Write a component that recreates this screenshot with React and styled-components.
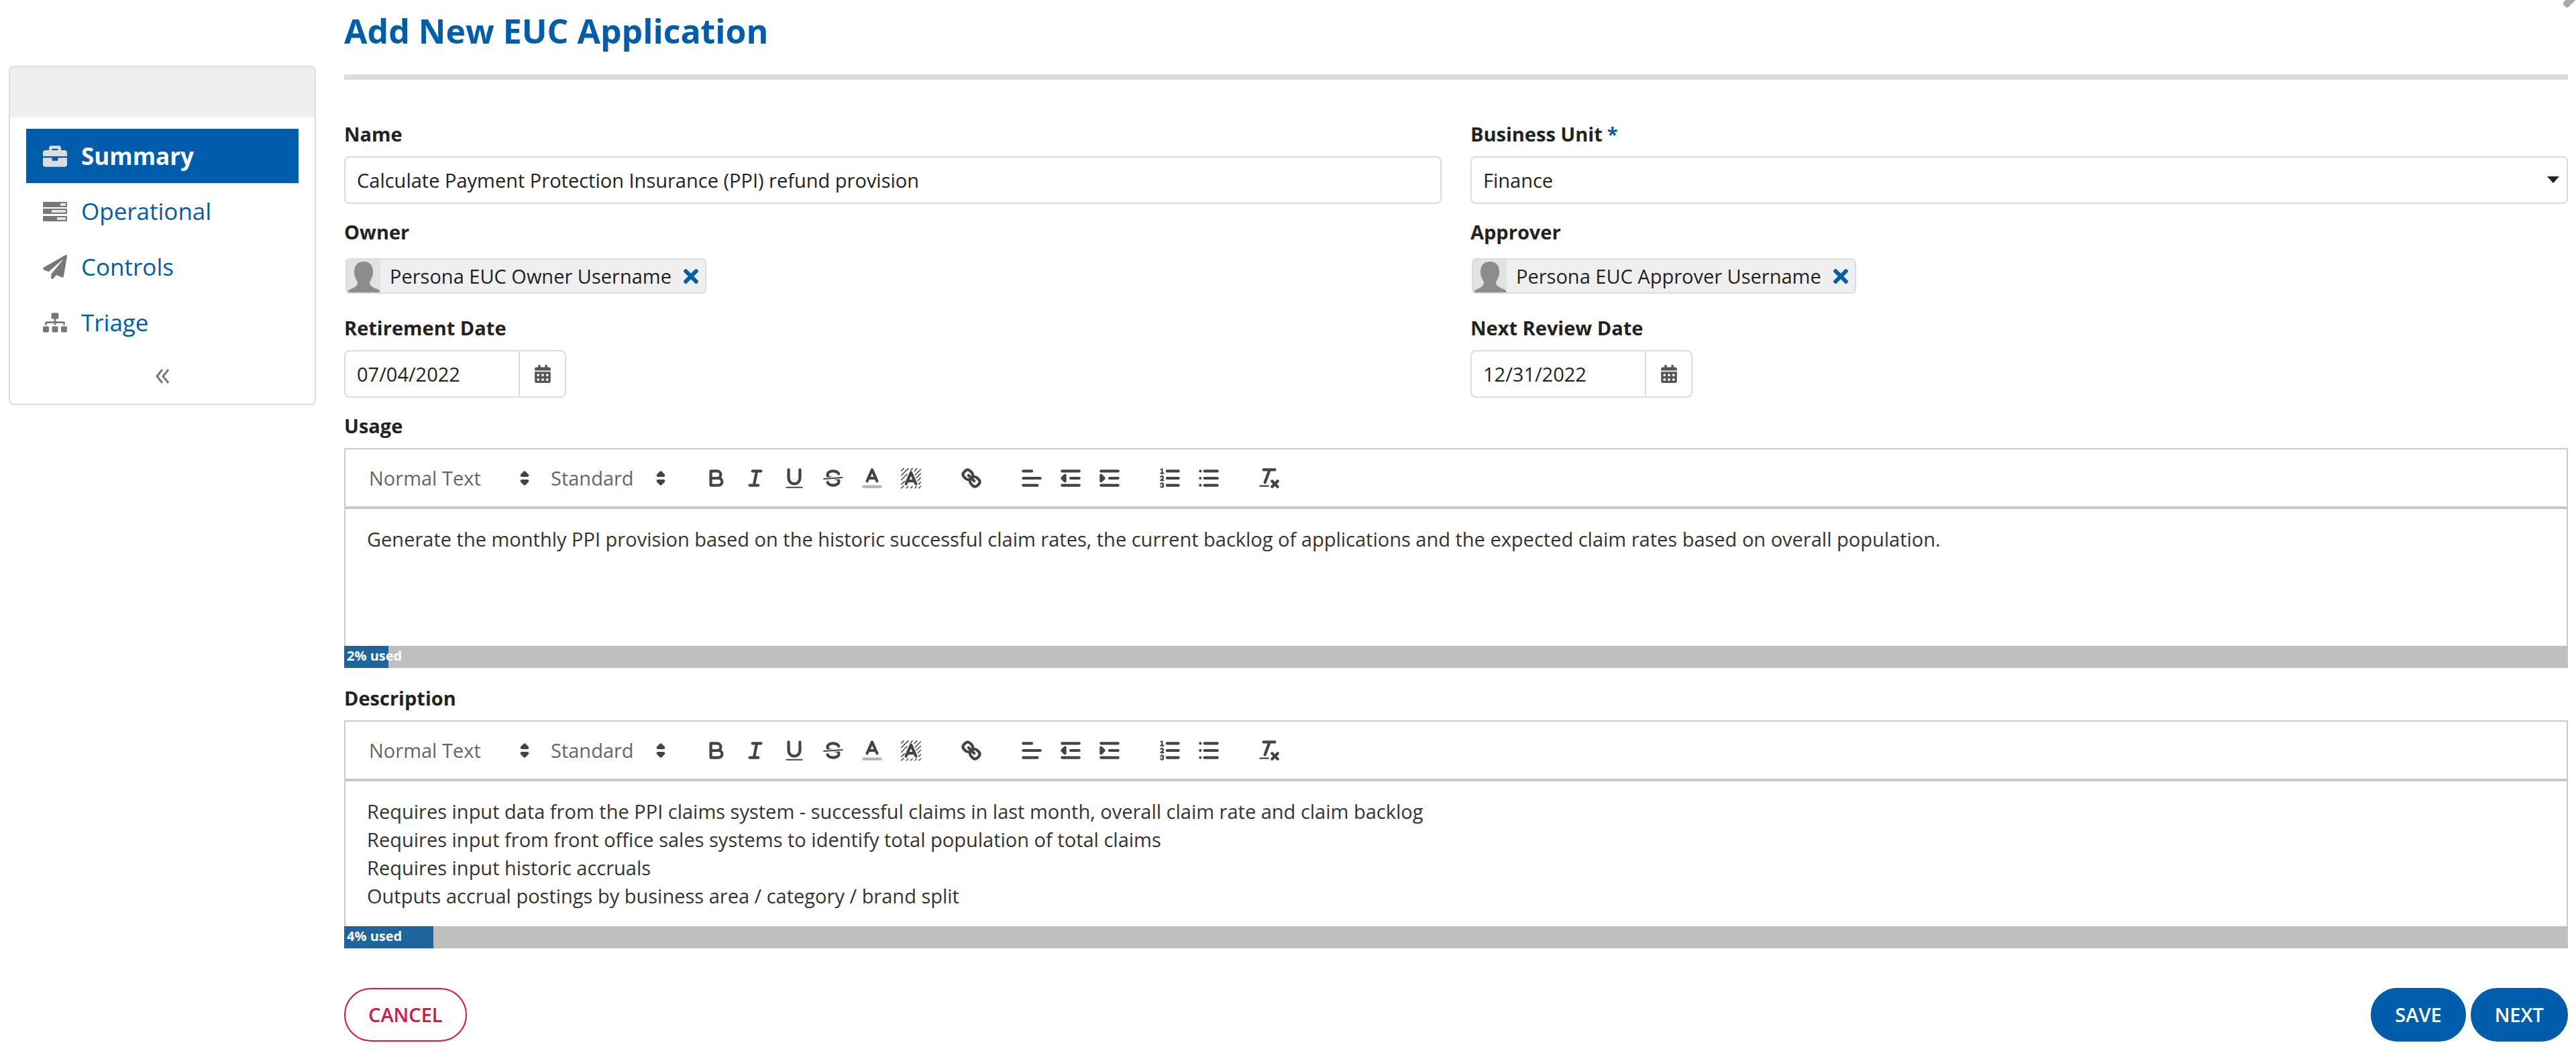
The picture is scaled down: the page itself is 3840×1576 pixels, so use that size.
import React, { useState } from "react";
import styled, { createGlobalStyle, css } from "styled-components";
import { FaBriefcase, FaPaperPlane, FaSitemap, FaTimes, FaCalendarAlt } from "react-icons/fa";

const GlobalStyle = createGlobalStyle`
  * {
    box-sizing: border-box;
  }

  body {
    margin: 0;
    background: #fff;
    color: #222;
    font-family: 'Open Sans', 'Noto Sans', sans-serif;
    font-size: 29px;
    line-height: 42px;
    overflow-x: hidden;
  }

  button, input, select, textarea {
    font: inherit;
    color: inherit;
    margin: 0;
  }
`;

const Page = styled.div`
  position: relative;
  display: flex;
  align-items: flex-start;
  gap: 42px;
  padding: 0 12px 22px 13px;
  overflow: hidden;
`;

const CloseButton = styled.button`
  position: absolute;
  top: -36px;
  right: -28px;
  display: flex;
  padding: 0;
  border: none;
  background: none;
  color: #aaa;
  font-size: 56px;
`;

const Sidebar = styled.nav`
  flex: 0 0 458px;
  margin-top: 98px;
  border: 2px solid #ddd;
  border-radius: 8px;
  overflow: hidden;
`;

const SidebarHeader = styled.div`
  height: 75px;
  background: #efefef;
`;

const NavList = styled.ul`
  list-style: none;
  margin: 0;
  padding: 17px 24px 0;
`;

const NavLink = styled.a`
  display: flex;
  align-items: center;
  gap: 21px;
  height: 83px;
  padding-left: 25px;
  color: #005dab;
  font-size: 35px;
  text-decoration: none;

  svg {
    width: 36px;
    height: 36px;
    color: #777;
  }

  ${props => props.$active && css`
    height: 81px;
    background: #005dab;
    color: #fff;
    font-weight: 700;

    svg {
      color: #ddd;
    }
  `}
`;

const CollapseButton = styled.button`
  display: block;
  width: 100%;
  height: 80px;
  padding: 0;
  border: none;
  background: none;
  color: #777;

  svg {
    width: 24px;
    height: 24px;
  }
`;

const Main = styled.main`
  flex: 1;
  min-width: 0;
`;

const Title = styled.h1`
  margin: 0;
  padding: 14px 0 33px;
  border-bottom: 8px solid #ddd;
  color: #005dab;
  font-size: 50px;
  font-weight: 700;
  line-height: 64px;
`;

const Columns = styled.div`
  display: grid;
  grid-template-columns: 1fr 1fr;
  column-gap: 43px;
  row-gap: 21px;
  margin-top: 60px;
`;

const Label = styled.label`
  display: block;
  margin-bottom: 12px;
  font-weight: 700;
`;

const Required = styled.span`
  margin-left: 7px;
  color: #005dab;
`;

const control = css`
  height: 71px;
  border: 2px solid #ddd;
  border-radius: 8px;
  background: #fff;
  padding: 0 17px;
`;

const TextInput = styled.input`
  ${control}
  display: block;
  width: 100%;
`;

const SelectWrap = styled.div`
  display: grid;
  align-items: center;

  select, svg {
    grid-area: 1 / 1;
  }

  svg {
    justify-self: end;
    margin-right: 12px;
    pointer-events: none;
  }
`;

const Select = styled.select`
  ${control}
  width: 100%;
  appearance: none;
`;

const PersonRow = styled.div`
  display: flex;
  padding: 6px 2px 9px;
`;

const Chip = styled.span`
  display: flex;
  align-items: center;
  height: 53px;
  border: 2px solid #ddd;
  border-radius: 6px;
  background: #efefef;
  overflow: hidden;
`;

const Avatar = styled.svg`
  width: 50px;
  height: 49px;
  margin-right: 14px;
  background: #e2e2e2;
`;

const RemoveButton = styled.button`
  display: flex;
  padding: 0 10px 0 18px;
  border: none;
  background: none;
  color: #005dab;

  svg {
    width: 22px;
    height: 32px;
  }
`;

const DateGroup = styled.div`
  display: flex;
`;

const DateInput = styled(TextInput)`
  width: 262px;
  border-radius: 8px 0 0 8px;
`;

const DateButton = styled.button`
  display: flex;
  align-items: center;
  justify-content: center;
  width: 69px;
  height: 71px;
  border: 2px solid #ddd;
  border-left: none;
  border-radius: 0 8px 8px 0;
  background: #fff;
  color: #555;

  svg {
    width: 24px;
    height: 27px;
  }
`;

const EditorField = styled.div`
  margin-top: ${props => props.$top}px;
`;

const Toolbar = styled.div`
  display: flex;
  align-items: center;
  gap: 32px;
  height: 87px;
  padding: 0 18px;
  border: 2px solid #ccc;
  border-bottom: none;
`;

const ToolGroup = styled.div`
  display: flex;
`;

const Picker = styled.div`
  display: grid;
  align-items: center;
  width: ${props => props.$width}px;
  height: 50px;
  color: #666;

  select, svg {
    grid-area: 1 / 1;
  }

  svg {
    justify-self: end;
    margin-right: 3px;
    pointer-events: none;
  }
`;

const PickerSelect = styled.select`
  width: 100%;
  height: 50px;
  padding: 0 17px;
  border: none;
  background: none;
  appearance: none;
`;

const ToolButton = styled.button`
  display: flex;
  align-items: center;
  justify-content: center;
  width: 58px;
  height: 50px;
  padding: 0;
  border: none;
  background: none;
`;

const ToolIcon = styled.svg`
  width: 38px;
  height: 38px;
  fill: none;
  stroke: #444;
  stroke-width: 2;
  stroke-linecap: round;
  stroke-linejoin: round;

  .fill {
    fill: #444;
    stroke: none;
  }

  .both {
    fill: #444;
  }

  .thin {
    stroke-width: 1;
  }

  .hatch {
    stroke-width: 0.7;
  }

  .faint {
    opacity: 0.4;
  }
`;

const EditorArea = styled.textarea`
  display: block;
  width: 100%;
  min-height: 208px;
  padding: 24px 32px;
  border: 2px solid #ccc;
  border-top: 4px solid #c8c8c8;
  border-bottom: none;
  background: #fff;
  color: #333;
  outline: none;
  overflow: hidden;
  resize: none;
`;

const Meter = styled.div`
  height: 33px;
  background: #bfbfbf;
`;

const MeterFill = styled.div`
  height: 100%;
  padding-left: 4px;
  background: #1f659d;
  color: #fff;
  font-size: 20px;
  font-weight: 700;
  line-height: 30px;
  white-space: nowrap;
`;

const Footer = styled.footer`
  display: flex;
  gap: 7px;
  margin-top: 59px;
`;

const Button = styled.button`
  height: 80px;
  padding: 0 34px;
  border: 2px solid #005dab;
  border-radius: 40px;
  background: #005dab;
  color: #fff;
  font-weight: 600;

  ${props => props.$cancel && css`
    margin-right: auto;
    border-color: #de1246;
    background: #fff;
    color: #de1246;
  `}
`;

const tools = [
  [
    ["Bold", <>
      <path d="M5,4H9.5A2.5,2.5,0,0,1,12,6.5v0A2.5,2.5,0,0,1,9.5,9H5V4Z" />
      <path d="M5,9h5.5A2.5,2.5,0,0,1,13,11.5v0A2.5,2.5,0,0,1,10.5,14H5V9Z" />
    </>],
    ["Italic", <path d="M7 4H13M5 14H11M8 14L10 4" />],
    ["Underline", <>
      <path d="M5,3V9a4,4,0,0,0,8,0V3" />
      <rect className="fill" x="3" y="15" width="12" height="1" rx="0.5" />
    </>],
    ["Strike", <>
      <path className="thin" d="M15.5 8.5L2.5 9.5" />
      <path className="fill" d="M9.007,8C6.542,7.791,6,7.519,6,6.5,6,5.792,7.283,5,9,5c1.571,0,2.765.679,2.969,1.309a1,1,0,0,0,1.9-.617C13.356,4.106,11.354,3,9,3,6.2,3,4,4.538,4,6.5a3.2,3.2,0,0,0,.5,1.843Z" />
      <path className="fill" d="M8.984,10C11.457,10.208,12,10.479,12,11.5c0,.708-1.283,1.5-3,1.5-1.571,0-2.765-.679-2.969-1.309a1,1,0,1,0-1.9.617C4.644,13.894,6.646,15,9,15c2.8,0,5-1.538,5-3.5a3.2,3.2,0,0,0-.5-1.843Z" />
    </>],
    ["Text color", <>
      <path className="faint" d="M3 15H15" />
      <path d="M5.5 11L9 3L12.5 11M11.63 9H6.38" />
    </>],
    ["Background color", <>
      <path className="hatch" d="M2.2 3.8L3.8 2.2M2.2 7L7 2.2M2.2 10.2L6.2 6.2M2.2 13.4L4.4 11.2M2.2 16L3.8 14.6M5.8 16L7 14.8M8.8 16L10 14.8M11.8 16L13 14.8M14.6 16L15.8 14.8M8.8 3.4L10 2.2M11.4 4L13.2 2.2M12 6.6L15.8 2.8M12.8 8.8L15.8 5.8M13.8 10.8L15.8 8.8M14.4 13.2L15.8 11.8" />
      <path d="M5.5 13L9 5L12.5 13M11.63 11H6.38" />
    </>],
  ],
  [
    ["Link", <>
      <path d="M7 7L11 11" />
      <path d="M8.9,4.577a3.476,3.476,0,0,1,.36,4.679A3.476,3.476,0,0,1,4.577,8.9C3.185,7.5,2.035,6.4,4.217,4.217S7.5,3.185,8.9,4.577Z" />
      <path d="M13.423,9.1a3.476,3.476,0,0,0-4.679-.36,3.476,3.476,0,0,0,.36,4.679c1.392,1.392,2.5,2.542,4.679.36S14.815,10.5,13.423,9.1Z" />
    </>],
  ],
  [
    ["Align", <path d="M3 4H9M3 9H15M3 14H13" />],
    ["Outdent", <>
      <path d="M3 4H15M9 9H15M3 14H15" />
      <path className="both" d="M5 7V11L3 9Z" />
    </>],
    ["Indent", <>
      <path d="M3 4H15M9 9H15M3 14H15" />
      <path className="both" d="M3 7V11L5 9Z" />
    </>],
  ],
  [
    ["Numbered list", <>
      <path d="M7 4H15M7 9H15M7 14H15" />
      <path className="thin" d="M2.5 5.5H4.5" />
      <path className="fill" d="M3.5,6A.5.5,0,0,1,3,5.5V3.085l-.276.138A.5.5,0,0,1,2.053,3c-.124-.247-.023-.324.224-.447l1-.5A.5.5,0,0,1,4,2.5v3A.5.5,0,0,1,3.5,6Z" />
      <path className="thin" d="M4.5,10.5h-2c0-.234,1.85-1.076,1.85-2.234A.959.959,0,0,0,2.5,8.156" />
      <path className="thin" d="M2.5,14.846a.959.959,0,0,0,1.85-.109A.7.7,0,0,0,3.75,14a.688.688,0,0,0,.6-.736.959.959,0,0,0-1.85-.109" />
    </>],
    ["Bulleted list", <path d="M6 4H15M6 9H15M6 14H15M3 4H3M3 9H3M3 14H3" />],
  ],
  [
    ["Clear formatting", <>
      <path d="M5 3H13M6 12L9.35 3M11 11L15 15M15 11L11 15" />
      <rect className="fill" x="2" y="14" width="7" height="1" rx="0.5" />
    </>],
  ],
];

const PickerArrows = () => (
  <ToolIcon viewBox="0 0 18 18" aria-hidden="true">
    <path className="both" d="M7 11L9 13L11 11ZM7 7L9 5L11 7Z" />
  </ToolIcon>
);

const TasksIcon = () => (
  <svg viewBox="0 0 36 36" fill="currentColor" aria-hidden="true">
    <rect x="0" y="4" width="36" height="8" rx="1" />
    <rect x="0" y="14" width="36" height="8" rx="1" />
    <rect x="0" y="25" width="36" height="8" rx="1" />
    <path fill="#e4e4e4" d="M26 6H34V10H26ZM13 16H34V20H13ZM21 27H34V31H21Z" />
  </svg>
);

const Person = ({ label, name }) => (
  <div>
    <Label as="div">{label}</Label>
    <PersonRow>
      <Chip>
        <Avatar viewBox="0 0 50 49" aria-hidden="true">
          <path fill="#8c8c8c" d="M25 3C34 3 39 9 39 18C39 26 36 29 34 34C34 39 38 41 45 44L49 46V49H2V46L6 44C13 41 16 39 16 34C14 29 11 26 11 18C11 9 16 3 25 3Z" />
        </Avatar>
        {name}
        <RemoveButton type="button" aria-label={`Remove ${name}`}><FaTimes /></RemoveButton>
      </Chip>
    </PersonRow>
  </div>
);

const DateField = ({ id, label, value }) => (
  <div>
    <Label htmlFor={id}>{label}</Label>
    <DateGroup>
      <DateInput id={id} type="text" defaultValue={value} />
      <DateButton type="button" aria-label={`Pick ${label}`}><FaCalendarAlt /></DateButton>
    </DateGroup>
  </div>
);

const Editor = ({ id, label, text, rows, used, top }) => (
  <EditorField $top={top}>
    <Label htmlFor={id}>{label}</Label>
    <Toolbar>
      <ToolGroup>
        <Picker $width={271}>
          <PickerSelect aria-label="Text style"><option>Normal Text</option></PickerSelect>
          <PickerArrows />
        </Picker>
        <Picker $width={203}>
          <PickerSelect aria-label="Text size"><option>Standard</option></PickerSelect>
          <PickerArrows />
        </Picker>
      </ToolGroup>
      {tools.map((group, i) => (
        <ToolGroup key={i}>
          {group.map(([name, shapes]) => (
            <ToolButton key={name} type="button" aria-label={name}>
              <ToolIcon viewBox="0 0 18 18">{shapes}</ToolIcon>
            </ToolButton>
          ))}
        </ToolGroup>
      ))}
    </Toolbar>
    <EditorArea id={id} rows={rows} defaultValue={text} spellCheck={false} />
    <Meter>
      <MeterFill style={{ width: `${used}%` }}>{used}% used</MeterFill>
    </Meter>
  </EditorField>
);

const navItems = [
  { name: "Summary", icon: <FaBriefcase /> },
  { name: "Operational", icon: <TasksIcon /> },
  { name: "Controls", icon: <FaPaperPlane /> },
  { name: "Triage", icon: <FaSitemap /> },
];

const App = () => {
  const [active, setActive] = useState("Summary");

  return (
    <Page>
      <GlobalStyle />
      <Sidebar>
        <SidebarHeader />
        <NavList>
          {navItems.map(item => (
            <li key={item.name}>
              <NavLink href="#" $active={item.name === active} onClick={() => setActive(item.name)}>
                {item.icon}
                {item.name}
              </NavLink>
            </li>
          ))}
        </NavList>
        <CollapseButton type="button" aria-label="Collapse">
          <svg viewBox="0 0 24 24" fill="none" stroke="currentColor" strokeWidth="3">
            <path d="M12 2L4 12L12 22M21 2L13 12L21 22" />
          </svg>
        </CollapseButton>
      </Sidebar>
      <Main>
        <Title>Add New EUC Application</Title>
        <Columns>
          <div>
            <Label htmlFor="name">Name</Label>
            <TextInput id="name" type="text" defaultValue="Calculate Payment Protection Insurance (PPI) refund provision" />
          </div>
          <div>
            <Label htmlFor="unit">Business Unit<Required>*</Required></Label>
            <SelectWrap>
              <Select id="unit"><option>Finance</option></Select>
              <svg width="20" height="11" viewBox="0 0 20 11" aria-hidden="true"><path d="M1 0H19L10 10Z" fill="#222" /></svg>
            </SelectWrap>
          </div>
          <Person label="Owner" name="Persona EUC Owner Username" />
          <Person label="Approver" name="Persona EUC Approver Username" />
          <DateField id="retirement" label="Retirement Date" value="07/04/2022" />
          <DateField id="review" label="Next Review Date" value="12/31/2022" />
        </Columns>
        <Editor
          id="usage"
          label="Usage"
          text="Generate the monthly PPI provision based on the historic successful claim rates, the current backlog of applications and the expected claim rates based on overall population."
          rows={3}
          used={2}
          top={21}
        />
        <Editor
          id="description"
          label="Description"
          text={"Requires input data from the PPI claims system - successful claims in last month, overall claim rate and claim backlog\nRequires input from front office sales systems to identify total population of total claims\nRequires input historic accruals\nOutputs accrual postings by business area / category / brand split"}
          rows={4}
          used={4}
          top={24}
        />
        <Footer>
          <Button type="button" $cancel>CANCEL</Button>
          <Button type="button">SAVE</Button>
          <Button type="button">NEXT</Button>
        </Footer>
      </Main>
      <CloseButton type="button" aria-label="Close"><FaTimes /></CloseButton>
    </Page>
  );
};

export default App;
